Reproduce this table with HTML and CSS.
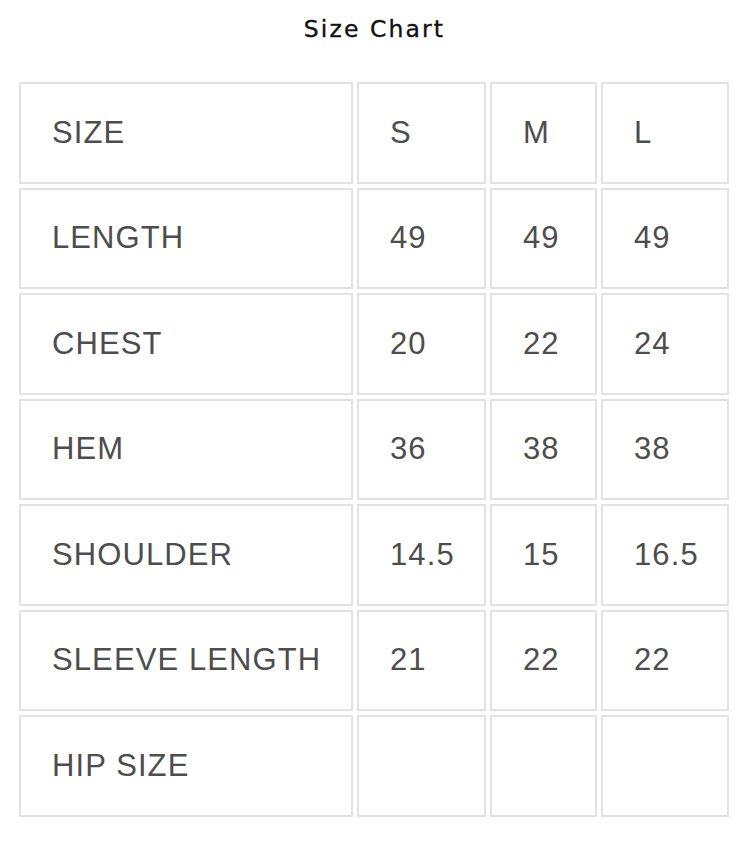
FILE: index.html
```html
<!DOCTYPE html>
<html>
<head>
<meta charset="utf-8">
<link rel="stylesheet" href="styles.css">
</head>
<body>
<div class="wrap">
  <h1 class="title">Size Chart</h1>
  <table class="chart">
    <colgroup>
      <col class="c-label">
      <col class="c-s">
      <col class="c-m">
      <col class="c-l">
    </colgroup>
    <tbody>
      <tr><td>SIZE</td><td>S</td><td>M</td><td>L</td></tr>
      <tr><td>LENGTH</td><td>49</td><td>49</td><td>49</td></tr>
      <tr><td>CHEST</td><td>20</td><td>22</td><td>24</td></tr>
      <tr><td>HEM</td><td>36</td><td>38</td><td>38</td></tr>
      <tr><td>SHOULDER</td><td>14.5</td><td>15</td><td>16.5</td></tr>
      <tr><td>SLEEVE LENGTH</td><td>21</td><td>22</td><td>22</td></tr>
      <tr><td>HIP SIZE</td><td></td><td></td><td></td></tr>
    </tbody>
  </table>
</div>
</body>
</html>
```
FILE: styles.css
```css
html, body {
  margin: 0;
  padding: 0;
  background: #ffffff;
}
.wrap {
  margin-left: 15px;
  width: 719px;
  padding-top: 14px;
}
.title {
  margin: 0;
  text-align: center;
  font-family: "DejaVu Sans", sans-serif;
  font-weight: 400;
  font-size: 23.5px;
  line-height: 30px;
  letter-spacing: 2.1px;
  color: #111111;
  -webkit-text-stroke: 0.35px #111111;
}
.chart {
  margin-top: 34px;
  border-collapse: separate;
  border-spacing: 4px 4px;
  table-layout: fixed;
  width: 718px;
  font-family: "Liberation Sans", Arial, sans-serif;
  font-size: 31px;
  letter-spacing: 1.1px;
  color: #4d4d4d;
}
.c-label { width: 334px; }
.c-s { width: 129px; }
.c-m { width: 107px; }
.c-l { width: 128px; }
.chart tr {
  height: 101.5px;
}
.chart td {
  border: 2px solid #e2e2e2;
  padding: 0 0 0 31px;
  vertical-align: middle;
  white-space: nowrap;
}
```
